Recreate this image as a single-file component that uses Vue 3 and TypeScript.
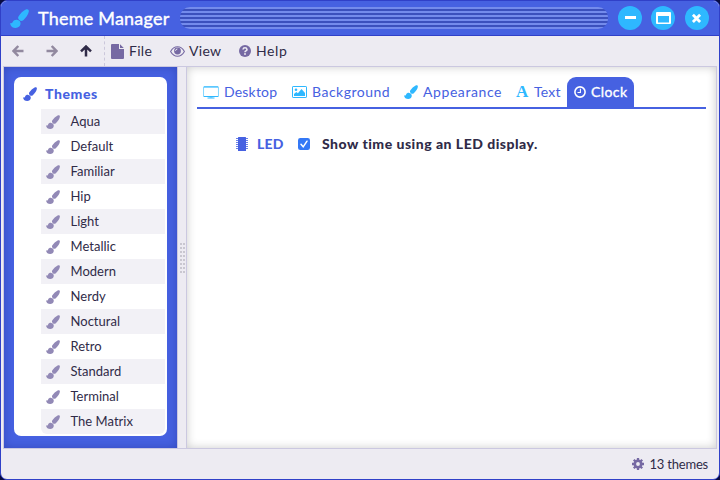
<script setup lang="ts">
import { h, type FunctionalComponent } from 'vue'

const themes: string[] = ['Aqua', 'Default', 'Familiar', 'Hip', 'Light', 'Metallic', 'Modern', 'Nerdy', 'Noctural', 'Retro', 'Standard', 'Terminal', 'The Matrix']

const Brush: FunctionalComponent = () =>
  h('svg', { viewBox: '0 0 16 16', fill: 'currentColor' }, [
    h('path', { d: 'M13.300 .5C14.800 -.3 16.200 .6 15.800 2.300C15.300 4.700 13.400 7.600 11.200 9.400C10 10.300 8.800 10.200 7.800 9.300C6.700 8.300 6.500 7.100 7.300 6C8.700 3.800 11 1.800 13.300 .5Z' }),
    h('path', { d: 'M5.800 9C7.900 9.200 9 10.600 8.900 12.500C8.700 14.700 6.900 16 4.800 16C2.400 16 .4 14.600 0 11.900C1.100 12.300 1.900 12 2.300 11C2.900 9.500 4.200 8.900 5.800 9Z' }),
  ])
</script>

<template>
  <div class="window">
    <header class="title-bar">
      <Brush class="app-icon" />
      <h1>Theme Manager</h1>
      <div class="grip"></div>
      <button class="round" aria-label="Minimize"><svg viewBox="0 0 24 24"><rect x="7" y="10" width="11" height="3" fill="#fff" /></svg></button>
      <button class="round maximize" aria-label="Maximize"><svg viewBox="0 0 24 24"><path fill="#fff" fill-rule="evenodd" d="M6 6h13q1 0 1 1v10q0 1-1 1H6q-1 0-1-1V7q0-1 1-1Zm1 4v6.500h11V10Z" /></svg></button>
      <button class="round close" aria-label="Close"><svg viewBox="0 0 24 24"><path d="m8.900 9.800 5.200 5.200m0-5.200-5.200 5.200" stroke="#fff" stroke-width="2.800" stroke-linecap="square" /></svg></button>
    </header>

    <nav class="toolbar">
      <svg class="arrow" viewBox="0 0 12 12"><path d="M11.500 6H2M6.300 1 1.500 6l4.800 5" /></svg>
      <svg class="arrow back" viewBox="0 0 12 12"><path d="M.5 6H10M5.700 1l4.800 5-4.800 5" /></svg>
      <svg class="arrow up" viewBox="0 0 12 12"><path d="M6 11.500V2M1 6.300l5-4.800 5 4.800" /></svg>
      <div class="menu file">
        <svg viewBox="0 0 13 15"><path fill="currentColor" d="M1 0h7v5h5v9q0 1-1 1H1q-1 0-1-1V1q0-1 1-1ZM9 .2 12.800 4H9Z" /></svg><span>File</span>
      </div>
      <div class="menu view">
        <svg viewBox="0 0 15 11"><path fill="none" stroke="currentColor" stroke-width="1.100" d="M.6 5.500Q3.200.8 7.500.8t6.900 4.700Q11.800 10.200 7.500 10.200T.6 5.500Z" /><circle cx="7.500" cy="5" r="3.400" fill="currentColor" /><path d="M5.500 4.800Q5.700 3.100 7.400 3" fill="none" stroke="#edebf2" /></svg><span>View</span>
      </div>
      <div class="menu help">
        <svg viewBox="0 0 12 12"><circle cx="6" cy="6" r="6" fill="currentColor" /><path d="M4 4.500Q4.200 2.800 6 2.800T8 4.500Q8 5.400 7 5.900T6 7.200" fill="none" stroke="#edebf2" stroke-width="1.600" /><rect x="5.100" y="8.200" width="1.800" height="1.600" fill="#edebf2" /></svg><span>Help</span>
      </div>
    </nav>

    <main class="body">
      <aside class="side">
        <section class="card">
          <h2><Brush class="brush" /><span>Themes</span></h2>
          <ul>
            <li v-for="t in themes" :key="t"><Brush class="brush" /><span>{{ t }}</span></li>
          </ul>
        </section>
      </aside>
      <div class="splitter"><i></i></div>
      <section class="content">
        <div class="tabs">
          <div class="tab desktop"><svg viewBox="0 0 16 13"><rect x=".5" y=".9" width="15" height="9.600" rx=".8" fill="none" stroke="#86d7ff" stroke-width="1.100" /><path d="M1 .9h14M1 10.500h14M4.500 12h7M6.500 11h3" stroke="currentColor" /></svg><span>Desktop</span></div>
          <div class="tab background"><svg viewBox="0 0 15 12"><rect x=".5" y=".5" width="14" height="11" rx=".6" fill="none" stroke="currentColor" /><circle cx="4" cy="3.700" r="1.300" fill="currentColor" /><path fill="currentColor" d="M2 10V8l2.300-2 1.600 1.300L9.500 3 13 7v3Z" /></svg><span>Background</span></div>
          <div class="tab appearance"><Brush /><span>Appearance</span></div>
          <div class="tab text"><b>A</b><span>Text</span></div>
          <div class="tab clock"><svg viewBox="0 0 12 12"><circle cx="6" cy="6" r="5.100" fill="none" stroke="currentColor" stroke-width="1.600" /><path d="M6.400 2.800v3.700H3.500" fill="none" stroke="currentColor" stroke-width="1.100" /></svg><span>Clock</span></div>
        </div>
        <label class="option">
          <svg class="chip" viewBox="0 0 12 14"><path d="M0 1.500h12M0 3.500h12M0 5.500h12M0 7.500h12M0 9.500h12M0 11.500h12" stroke="currentColor" stroke-width="1" opacity=".8" /><rect x="2" y="0" width="8" height="14" rx=".6" fill="currentColor" /></svg>
          <span class="led">LED</span>
          <svg class="check" viewBox="0 0 12 12"><rect width="12" height="12" rx="2.300" fill="#3478f6" /><path d="m3 6.300 2.200 2.500L9 3.200" fill="none" stroke="#fff" stroke-width="1.500" stroke-linecap="round" /></svg>
          <span class="caption">Show time using an LED display.</span>
        </label>
      </section>
    </main>

    <footer class="status">
      <svg viewBox="0 0 12 12"><path d="M6 0v12M0 6h12M1.800 1.800l8.400 8.400M10.200 1.800l-8.400 8.400" stroke="currentColor" stroke-width="2.300" /><circle cx="6" cy="6" r="3.200" fill="#edebf2" stroke="currentColor" stroke-width="2.600" /></svg>
      <span>13 themes</span>
    </footer>
  </div>
</template>

<style>
body { margin: 0; background: #080c40; }
</style>

<style scoped>
* { box-sizing: border-box; }
.window { width: 720px; height: 480px; border: 1px solid #3040c8; border-radius: 7px; background: #edebf2; overflow: hidden; display: flex; flex-direction: column; font-family: Lato, "Liberation Sans", sans-serif; font-size: 14px; color: #302b48; white-space: nowrap; }
.title-bar { height: 35px; flex: none; background: #4661e1; border-bottom: 1px solid #3040c8; display: flex; align-items: center; padding: 0 10px 0 9px; }
.app-icon { width: 19px; height: 19px; color: #2eb8ff; flex: none; }
h1 { margin: 0 0 0 9px; width: 142px; font-size: 18px; line-height: 24px; font-weight: 400; -webkit-text-stroke: .4px #fff; color: #fff; letter-spacing: .22px; }
.grip { width: 428px; height: 22px; border-radius: 10px; background: repeating-linear-gradient(#748bec 0 2px, #3b50bd 2px 4px); }
.round { width: 24px; height: 24px; padding: 0; border: 0; border-radius: 50%; background: #2eb8ff; margin-left: 10px; flex: none; }
.round.maximize { margin-left: 9px; }
.round svg { display: block; width: 24px; height: 24px; }
.toolbar { height: 30px; flex: none; display: flex; align-items: center; padding-left: 11px; }
.arrow { width: 12px; height: 12px; margin-right: 22px; fill: none; stroke: #92899f; stroke-width: 2.5; }
.arrow.up { stroke: #302b48; margin-right: 12px; }
.menu { height: 30px; display: flex; align-items: center; color: #302b48; letter-spacing: .3px; }
.menu span { padding-bottom: 1px; }
.menu svg { color: #7669a3; flex: none; }
.file { width: 66px; border-left: 1px dashed #cbc7db; padding-left: 6px; }
.file svg { width: 13px; height: 15px; margin-right: 5px; }
.view { width: 69px; }
.view svg { width: 15px; height: 11px; margin-right: 4px; }
.help { letter-spacing: .6px; }
.help svg { width: 12px; height: 12px; margin-right: 5px; }
.body { height: 383px; flex: none; margin: 0 2px; border: 1px solid #cbc8e0; display: flex; }
.side { width: 173px; padding: 10px; background: #4661e1; box-shadow: inset 0 0 10px #26399e88; }
.card { width: 153px; height: 359px; border-radius: 7px; background: #fff; padding: 0 2px 2px 27px; }
h2 { height: 32px; margin: 0 0 0 -18px; display: flex; align-items: center; gap: 8px; color: #4661e1; font-size: 14px; font-weight: 900; padding-top: 2px; letter-spacing: .6px; }
h2 span { padding-bottom: 2px; }
.brush { width: 14px; height: 14px; flex: none; }
ul { list-style: none; margin: 0; padding: 0; border-radius: 0 0 6px 6px; overflow: hidden; }
li { height: 25px; display: flex; align-items: center; padding-left: 5px; gap: 10.500px; font-size: 13px; letter-spacing: .02px; }
li span { padding-bottom: 1px; }
li:nth-child(odd) { background: #f2f1f6; }
li svg { color: #9289b6; }
.splitter { width: 10px; border-left: 1px solid #cbc8e0; border-right: 1px solid #cbc8e0; background: #edebf2; display: flex; align-items: center; padding-left: 2px; }
.splitter i { width: 5px; height: 30px; background: repeating-linear-gradient(transparent 0 2px, #edebf2 2px 4px), repeating-linear-gradient(90deg, #c9c7d0 0 2px, #edebf2 2px 3px); }
.content { flex: 1; background: #fff; box-shadow: inset 0 0 10px #0003; padding: 10px 10px 0; }
.tabs { height: 32px; border-bottom: 2px solid #4661e1; display: flex; align-items: stretch; color: #4661e1; }
.tab { height: 30px; display: flex; align-items: center; flex: none; letter-spacing: .2px; }
.tab span { padding-bottom: 1px; }
.tab svg { color: #2eb8ff; flex: none; }
.desktop { width: 95px; padding-left: 6px; }
.desktop svg { width: 16px; height: 13px; margin-right: 5px; }
.background { width: 112px; letter-spacing: .5px; }
.background svg { width: 15px; height: 12px; margin-right: 5px; }
.appearance { width: 112px; letter-spacing: .58px; }
.appearance svg { width: 14px; height: 14px; margin-right: 5px; }
.text { width: 51px; }
.text b { width: 18px; color: #2eb8ff; font: 700 17px/20px "Liberation Serif", serif; }
.clock { width: 67px; background: #4661e1; color: #fff; border-radius: 9px 9px 0 0; padding-left: 7px; letter-spacing: .4px; }
.clock span { -webkit-text-stroke: .35px #fff; }
.clock svg { width: 12px; height: 12px; color: #fff; margin-right: 5px; }
.option { display: flex; align-items: center; height: 24px; margin: 23px 0 0 39px; font-weight: 900; }
.option span { padding-bottom: 2px; }
.chip { width: 12px; height: 14px; color: #4661e1; }
.led { width: 41px; margin-left: 9px; color: #4661e1; letter-spacing: .2px; }
.check { width: 12px; height: 12px; margin-right: 12px; }
.caption { letter-spacing: .5px; }
.status { flex: 1; display: flex; justify-content: flex-end; align-items: center; gap: 5px; padding-right: 11px; font-size: 13px; letter-spacing: -.2px; }
.status svg { width: 12px; height: 12px; color: #7669a3; margin-bottom: 1px; }
.status span { padding-bottom: 1px; }
</style>
